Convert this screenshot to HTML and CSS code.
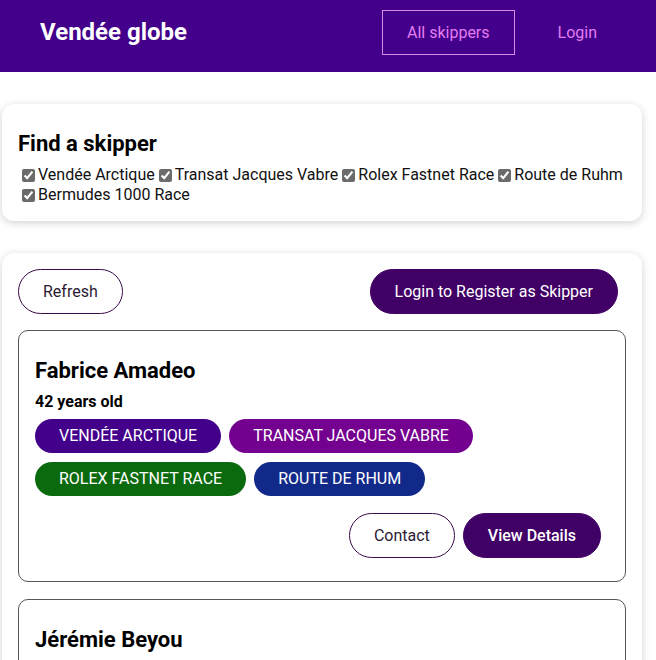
FILE: index.html
```html
<!DOCTYPE html>
<html lang="fr">
<head>
<meta charset="utf-8">
<title>Vendée globe</title>
<link rel="stylesheet" href="styles.css">
</head>
<body>
<header class="topbar">
  <div class="brand">Vendée globe</div>
  <nav class="nav">
    <a class="nav-link active" href="#">All skippers</a>
    <a class="nav-link" href="#">Login</a>
  </nav>
</header>
<main class="main">
  <section class="card filter-card">
    <h2 class="card-title">Find a skipper</h2>
    <div class="filters"><label class="filter"><input type="checkbox" checked>Vendée Arctique</label><label class="filter"><input type="checkbox" checked>Transat Jacques Vabre</label><label class="filter"><input type="checkbox" checked>Rolex Fastnet Race</label><label class="filter"><input type="checkbox" checked>Route de Ruhm</label><label class="filter"><input type="checkbox" checked>Bermudes 1000 Race</label></div>
  </section>
  <section class="card list-card">
    <div class="toolbar">
      <button class="btn btn-outline">Refresh</button>
      <button class="btn btn-solid">Login to Register as Skipper</button>
    </div>
    <article class="skipper">
      <h3 class="skipper-name">Fabrice Amadeo</h3>
      <div class="skipper-age">42 years old</div>
      <div class="tags">
        <span class="tag tag-arctique">Vendée Arctique</span>
        <span class="tag tag-transat">Transat Jacques Vabre</span>
        <span class="tag tag-fastnet">Rolex Fastnet Race</span>
        <span class="tag tag-rhum">Route de Rhum</span>
      </div>
      <div class="actions">
        <button class="btn btn-outline">Contact</button>
        <button class="btn btn-solid btn-strong">View Details</button>
      </div>
    </article>
    <article class="skipper">
      <h3 class="skipper-name">Jérémie Beyou</h3>
      <div class="skipper-age">38 years old</div>
    </article>
  </section>
</main>
</body>
</html>
```
FILE: styles.css
```css
html, body {
  margin: 0;
  padding: 0;
}
body {
  font-family: Roboto, "Liberation Sans", Arial, sans-serif;
  color: #000;
  background: #fff;
  overflow: hidden;
}
.topbar {
  height: 72px;
  box-sizing: border-box;
  background: #42008b;
  display: flex;
  align-items: center;
  justify-content: space-between;
  padding: 0 34px 8px 40px;
}
.brand {
  color: #fff;
  font-size: 24px;
  font-weight: 700;
}
.nav {
  display: flex;
  align-items: center;
  gap: 18px;
}
.nav-link {
  color: #e47cf0;
  text-decoration: none;
  font-size: 16px;
  line-height: 19px;
  padding: 12px 24px;
  border: 1px solid transparent;
}
.nav-link.active {
  border-color: #d88ae6;
}
.main {
  padding: 32px 14px 0 2px;
  display: flex;
  flex-direction: column;
  gap: 32px;
}
.card {
  background: #fff;
  border-radius: 12px;
  box-shadow: 0 2px 8px rgba(0, 0, 0, 0.18);
  padding: 16px;
}
.card-title {
  margin: 11px 0 8px;
  font-size: 22px;
  font-weight: 700;
  line-height: 26px;
}
.filters {
  font-size: 16px;
  line-height: 20px;
  color: #111;
}
.filter input {
  accent-color: #6b6b6b;
  vertical-align: -2px;
  margin: 3px 3px 3px 4px;
}
.toolbar {
  display: flex;
  justify-content: space-between;
  align-items: center;
  margin-bottom: 16px;
}
.btn {
  font-family: inherit;
  font-size: 16px;
  line-height: 19px;
  padding: 12px 24px;
  border-radius: 23px;
  cursor: pointer;
  margin-right: 8px;
}
.toolbar .btn:first-child {
  margin-right: 0;
}
.btn-outline {
  background: #fff;
  color: #2a1a33;
  border: 1px solid #3a0a4a;
}
.btn-solid {
  background: #400065;
  color: #fff;
  border: 1px solid #400065;
}
.btn-strong {
  font-weight: 500;
}
.skipper {
  border: 1px solid #555;
  border-radius: 10px;
  padding: 16px;
  margin-bottom: 17px;
}
.skipper-name {
  margin: 11px 0 8px;
  font-size: 22px;
  font-weight: 700;
  line-height: 26px;
}
.skipper-age {
  font-size: 16px;
  font-weight: 700;
  line-height: 19px;
  margin-bottom: 8px;
}
.tags {
  display: flex;
  flex-wrap: wrap;
  gap: 9px 8px;
}
.tag {
  color: #fff;
  text-transform: uppercase;
  font-size: 16px;
  line-height: 19px;
  padding: 7px 24px 8px;
  border-radius: 17px;
}
.tag-arctique { background: #42008b; }
.tag-transat { background: #740090; }
.tag-fastnet { background: #0b6a0e; }
.tag-rhum { background: #112a8a; }
.actions {
  display: flex;
  justify-content: flex-end;
  margin-top: 17px;
  margin-bottom: 7px;
}
```
